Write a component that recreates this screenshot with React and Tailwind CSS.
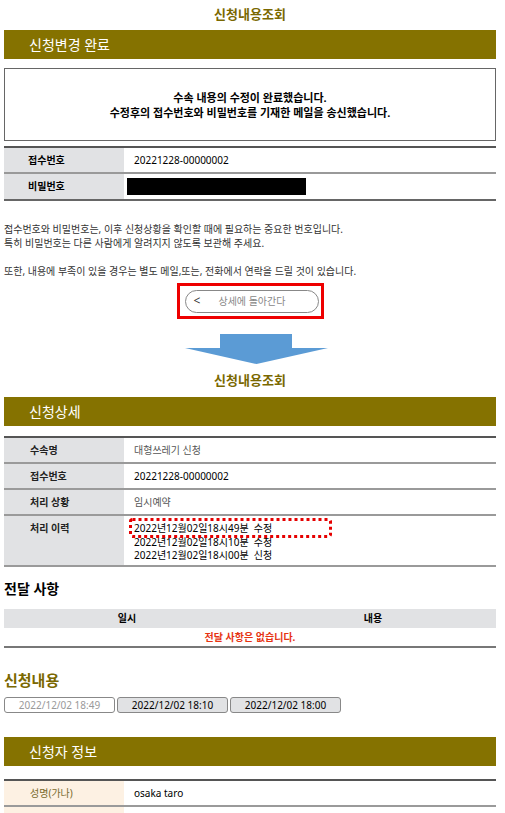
import React from 'react';

const font = "font-['Noto_Sans','Noto_Sans_CJK_KR',sans-serif]";

function SectionBar({ title }) {
  return (
    <div className="h-[29px] bg-[#857200] flex items-center pl-[25px]">
      <span className="text-[14px] text-white">{title}</span>
    </div>
  );
}

function InfoRow({ label, children, peach, tall }) {
  return (
    <div className={`flex border-b-2 border-[#9a9a9a] ${tall ? 'h-[51px]' : 'h-[26px]'}`}>
      <div
        className={`w-[120px] shrink-0 pl-[26px] text-[10px] font-bold ${
          peach ? 'bg-[#fdf1e3] text-[#7a6a2c] font-normal' : 'bg-[#e1e2e4] text-[#222]'
        } ${tall ? 'pt-[5px]' : 'flex items-center'}`}
      >
        {label}
      </div>
      <div className={`relative flex-1 pl-[10px] text-[10px] ${tall ? 'pt-[6px] leading-[13.5px]' : 'flex items-center'}`}>
        {children}
      </div>
    </div>
  );
}

export default function App() {
  const history = [
    '2022년12월02일18시49분  수정',
    '2022년12월02일18시10분  수정',
    '2022년12월02일18시00분  신청',
  ];
  const versions = [
    { label: '2022/12/02 18:49', current: true },
    { label: '2022/12/02 18:10' },
    { label: '2022/12/02 18:00' },
  ];

  return (
    <div className={`${font} w-[505px] h-[813px] overflow-hidden bg-white text-black`}>
      <div className="w-[492px] ml-[4px]">
        {/* 상단 제목 */}
        <div className="h-[30px] flex items-center justify-center">
          <span className="text-[13px] font-bold text-[#7a6800]">신청내용조회</span>
        </div>
        <SectionBar title="신청변경 완료" />

        {/* 완료 메시지 */}
        <div className="mt-[9px] h-[73px] border border-[#666] flex flex-col items-center justify-center text-[11px] font-bold leading-[15px]">
          <span>수속 내용의 수정이 완료했습니다.</span>
          <span>수정후의 접수번호와 비밀번호를 기재한 메일을 송신했습니다.</span>
        </div>

        <div className="mt-[5px] border-t-2 border-[#555]">
          <div className="flex h-[26px] border-b-2 border-[#999]">
            <div className="w-[120px] bg-[#e1e2e4] pl-[24px] flex items-center text-[10px] font-bold">접수번호</div>
            <div className="pl-[10px] flex items-center text-[10px]">20221228-00000002</div>
          </div>
          <div className="flex h-[27px] border-b-2 border-[#666]">
            <div className="w-[120px] bg-[#e1e2e4] pl-[24px] flex items-center text-[10px] font-bold">비밀번호</div>
            <div className="pl-[3px] flex items-center">
              <div className="w-[179px] h-[17px] bg-black" />
            </div>
          </div>
        </div>

        {/* 안내문 */}
        <div className="mt-[21px] text-[10px] leading-[14px] text-[#333]">
          <p>접수번호와 비밀번호는, 이후 신청상황을 확인할 때에 필요하는 중요한 번호입니다.</p>
          <p>특히 비밀번호는 다른 사람에게 알려지지 않도록 보관해 주세요.</p>
          <p className="mt-[14px]">또한, 내용에 부족이 있을 경우는 별도 메일,또는, 전화에서 연락을 드릴 것이 있습니다.</p>
        </div>

        {/* 돌아가기 버튼 */}
        <div className="mt-[5px] flex justify-center">
          <div className="w-[147px] h-[36px] border-[3px] border-[#ee0000] flex items-center pl-[5px]">
            <button className="w-[134px] h-[23px] rounded-full border border-[#888] flex items-center px-[8px] text-[10px] text-[#888]">
              <span className="text-[#333] text-[12px]">&lt;</span>
              <span className="flex-1 text-center pr-[6px]">상세에 돌아간다</span>
            </button>
          </div>
        </div>

        {/* 화살표 */}
        <div className="mt-[15px] flex justify-center pl-[13px]">
          <svg width="143" height="30" viewBox="0 0 143 30">
            <rect x="35" y="0" width="72" height="15" fill="#5b9bd5" />
            <polygon points="0,14 143,14 71.5,30" fill="#5b9bd5" />
          </svg>
        </div>

        <div className="h-[33px] flex items-center justify-center">
          <span className="text-[13px] font-bold text-[#7a6800]">신청내용조회</span>
        </div>
        <SectionBar title="신청상세" />

        {/* 신청상세 테이블 */}
        <div className="mt-[10px] border-t-2 border-[#555]">
          <InfoRow label="수속명">
            <span className="text-[#555]">대형쓰레기 신청</span>
          </InfoRow>
          <InfoRow label="접수번호">20221228-00000002</InfoRow>
          <InfoRow label="처리 상황">
            <span className="text-[#555]">임시예약</span>
          </InfoRow>
          <InfoRow label="처리 이력" tall>
            {history.map((h) => (
              <div key={h} className="whitespace-pre">{h}</div>
            ))}
            <svg className="absolute left-[5px] top-[2px]" width="203" height="20" viewBox="0 0 203 20">
              <rect x="1.5" y="1.5" width="200" height="17" rx="2" fill="none" stroke="#e60000" strokeWidth="3" strokeDasharray="3 3" />
            </svg>
          </InfoRow>
        </div>

        {/* 전달 사항 */}
        <div className="h-[42px] flex items-center">
          <span className="text-[14px] font-bold">전달 사항</span>
        </div>
        <div className="border-b-2 border-[#777]">
          <div className="h-[19px] bg-[#e1e2e4] flex text-[10px] font-bold">
            <div className="flex-1 flex items-center justify-center">일시</div>
            <div className="flex-1 flex items-center justify-center">내용</div>
          </div>
          <div className="h-[18px] flex items-center justify-center text-[10px] font-bold text-[#e63312]">
            전달 사항은 없습니다.
          </div>
        </div>

        {/* 신청내용 */}
        <div className="h-[46px] flex items-end pb-[3px]">
          <span className="text-[15px] font-bold text-[#7a6800]">신청내용</span>
        </div>
        <div className="mt-[3px] flex gap-[2px]">
          {versions.map((v) => (
            <button
              key={v.label}
              className={`w-[111px] h-[16px] rounded-[3px] border border-[#888] flex items-center justify-center text-[10px] ${
                v.current ? 'bg-white text-[#999]' : 'bg-[#e1e2e4] text-black'
              }`}
            >
              {v.label}
            </button>
          ))}
        </div>

        <div className="mt-[24px]">
          <SectionBar title="신청자 정보" />
        </div>

        {/* 신청자 정보 테이블 */}
        <div className="mt-[13px] border-t-2 border-[#555]">
          <InfoRow label="성명(가나)" peach>
            osaka taro
          </InfoRow>
          <InfoRow label="" peach>
            {''}
          </InfoRow>
        </div>
      </div>
    </div>
  );
}
